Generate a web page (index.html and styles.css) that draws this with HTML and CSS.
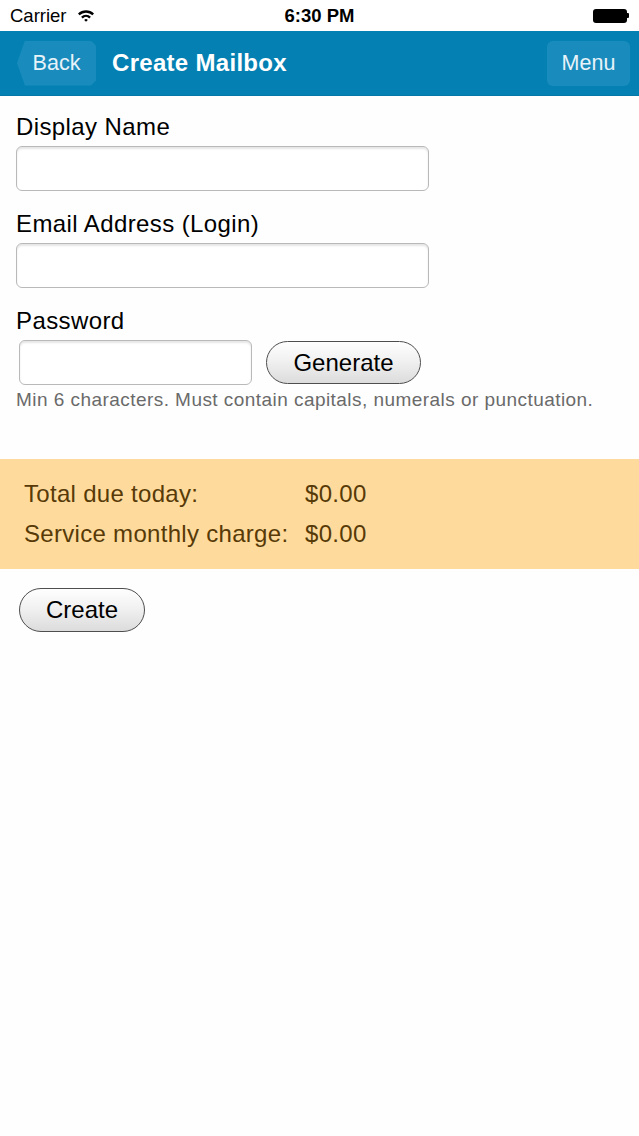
FILE: index.html
```html
<!DOCTYPE html>
<html>
<head>
<meta charset="utf-8">
<link rel="stylesheet" href="styles.css">
</head>
<body>
<div class="status">
  <div class="status-left">
    <span class="carrier">Carrier</span>
    <svg class="wifi" width="18" height="13" viewBox="0 0 18 13">
      <path d="M1 4.6 A11.5 11.5 0 0 1 17 4.6 L15.4 6.3 A9.2 9.2 0 0 0 2.6 6.3 Z" fill="#000"/>
      <path d="M4.1 7.8 A7 7 0 0 1 13.9 7.8 L12.3 9.4 A4.8 4.8 0 0 0 5.7 9.4 Z" fill="#000"/>
      <path d="M7.2 10.9 A2.6 2.6 0 0 1 10.8 10.9 L9 12.8 Z" fill="#000"/>
    </svg>
  </div>
  <span class="time">6:30 PM</span>
  <div class="status-right">
    <div class="battery"><div class="battery-body"></div><div class="battery-nub"></div></div>
  </div>
</div>
<div class="navbar">
  <button class="nav-btn back">Back</button>
  <h1 class="title">Create Mailbox</h1>
  <button class="nav-btn menu">Menu</button>
</div>
<main class="content">
  <div class="field">
    <label class="label">Display Name</label>
    <input class="input wide" type="text">
  </div>
  <div class="field">
    <label class="label">Email Address (Login)</label>
    <input class="input wide" type="text">
  </div>
  <div class="field pw">
    <label class="label">Password</label>
    <div class="pw-row">
      <input class="input short" type="password">
      <button class="pill generate">Generate</button>
    </div>
    <p class="hint">Min 6 characters. Must contain capitals, numerals or punctuation.</p>
  </div>
</main>
<section class="summary">
  <div class="sum-row"><span>Total due today:</span><span>$0.00</span></div>
  <div class="sum-row"><span>Service monthly charge:</span><span>$0.00</span></div>
</section>
<div class="actions">
  <button class="pill create">Create</button>
</div>
</body>
</html>
```
FILE: styles.css
```css
* { box-sizing: border-box; }
html, body { margin: 0; padding: 0; }
body {
  width: 639px;
  min-height: 1136px;
  background: #fefefe;
  font-family: "Liberation Sans", Arial, sans-serif;
  color: #000;
}
.status {
  height: 31px;
  background: #fff;
  display: flex;
  align-items: center;
  justify-content: space-between;
  padding: 0 10px;
  position: relative;
}
.status-left { display: flex; align-items: center; gap: 10px; }
.carrier { font-size: 18.5px; }
.wifi { margin-top: -1px; }
.time {
  position: absolute;
  left: 0; right: 0;
  text-align: center;
  font-weight: bold;
  font-size: 18.5px;
  pointer-events: none;
}
.status-right { display: flex; align-items: center; }
.battery { display: flex; align-items: center; }
.battery-body {
  width: 34px; height: 14px;
  background: #000;
  border-radius: 3px;
}
.battery-nub { width: 2px; height: 5px; background: #000; border-radius: 0 1px 1px 0; }

.navbar {
  height: 65px;
  background: #0580b3;
  display: flex;
  align-items: center;
  padding: 0 9px 0 17px;
  border-bottom: 1px solid #0678a8;
}
.nav-btn {
  height: 45px;
  border: none;
  background: #198cbd;
  color: #e8f3f9;
  font-family: "Liberation Sans", Arial, sans-serif;
  font-size: 21.5px;
  border-radius: 6px;
  padding: 0;
}
.back {
  width: 79px;
  clip-path: polygon(0 50%, 8px 0, calc(100% - 5px) 0, 100% 5px, 100% calc(100% - 5px), calc(100% - 5px) 100%, 8px 100%);
  border-radius: 0 6px 6px 0;
}
.menu { width: 83px; margin-left: auto; }
.title {
  margin: 0 0 0 16px;
  color: #fff;
  font-size: 24px;
  letter-spacing: 0.3px;
  font-weight: bold;
}

.content { padding: 18px 0 0 16px; }
.field { display: flex; flex-direction: column; align-items: flex-start; margin-bottom: 20px; }
.label { font-size: 24px; letter-spacing: 0.4px; line-height: 26px; margin-bottom: 6px; }
.input {
  height: 45px;
  border: 1px solid #b9b9b9;
  border-radius: 6px;
  background: #fff;
  box-shadow: inset 0 2px 2px rgba(0,0,0,0.10);
  font-size: 20px;
  padding: 0 8px;
  font-family: "Liberation Sans", Arial, sans-serif;
}
.wide { width: 413px; }
.pw { margin-bottom: 0; }
.pw-row { display: flex; align-items: center; gap: 14px; padding-left: 3px; }
.short { width: 233px; }
.pill {
  height: 43px;
  border: 1px solid #4e4e4e;
  border-radius: 22px;
  background: linear-gradient(#fefefe 0%, #f1f1f1 45%, #dcdcdc 100%);
  font-family: "Liberation Sans", Arial, sans-serif;
  font-size: 24px;
  color: #000;
  padding: 0;
  box-shadow: 0 1px 0 rgba(255,255,255,0.8);
}
.generate { width: 155px; }
.hint {
  margin: 4px 0 0;
  font-size: 19px;
  letter-spacing: 0.45px;
  line-height: 22px;
  color: #6a6a6a;
}

.summary {
  margin-top: 48px;
  background: #fedb9c;
  padding: 15px 0 15px 24px;
  color: #573a08;
  font-size: 24px;
  letter-spacing: 0.3px;
}
.sum-row { display: grid; grid-template-columns: 281px auto; line-height: 40px; }

.actions { padding: 19px 0 0 19px; }
.create { width: 126px; height: 44px; }
```
